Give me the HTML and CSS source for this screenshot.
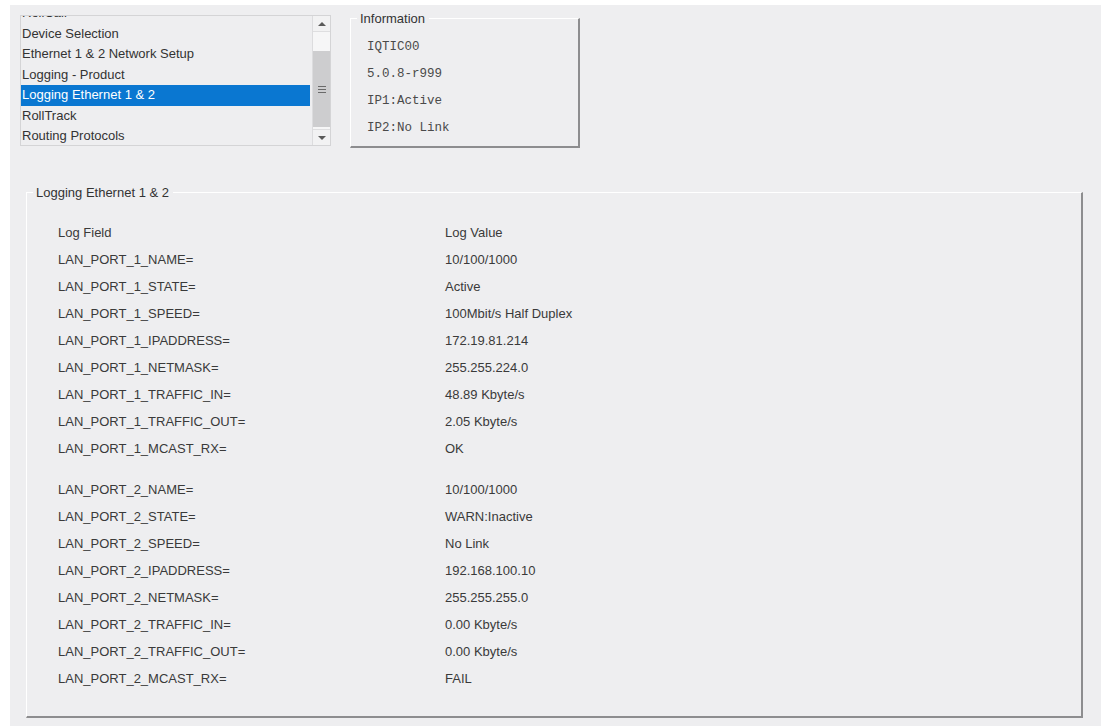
FILE: index.html
```html
<!DOCTYPE html>
<html>
<head>
<meta charset="utf-8">
<title>Logging Ethernet 1 &amp; 2</title>
<link rel="stylesheet" href="styles.css">
</head>
<body>
<div class="window">
  <div class="top">
    <div class="listbox">
      <div class="list-view">
        <ul class="items">
          <li>RollCall</li>
          <li>Device Selection</li>
          <li>Ethernet 1 &amp; 2 Network Setup</li>
          <li>Logging - Product</li>
          <li class="selected">Logging Ethernet 1 &amp; 2</li>
          <li>RollTrack</li>
          <li>Routing Protocols</li>
        </ul>
      </div>
      <div class="scrollbar">
        <div class="sb-btn"><span class="arrow-up"></span></div>
        <div class="sb-track sb-track-top"></div>
        <div class="sb-thumb"><span class="grip"></span></div>
        <div class="sb-track sb-track-bottom"></div>
        <div class="sb-btn"><span class="arrow-down"></span></div>
      </div>
    </div>

    <fieldset class="group info">
      <legend>Information</legend>
      <div class="info-lines">
        <div>IQTIC00</div>
        <div>5.0.8-r999</div>
        <div>IP1:Active</div>
        <div>IP2:No Link</div>
      </div>
    </fieldset>
  </div>

  <fieldset class="group log">
    <legend>Logging Ethernet 1 &amp; 2</legend>
    <div class="log-grid">
      <div>Log Field</div><div>Log Value</div>
      <div>LAN_PORT_1_NAME=</div><div>10/100/1000</div>
      <div>LAN_PORT_1_STATE=</div><div>Active</div>
      <div>LAN_PORT_1_SPEED=</div><div>100Mbit/s Half Duplex</div>
      <div>LAN_PORT_1_IPADDRESS=</div><div>172.19.81.214</div>
      <div>LAN_PORT_1_NETMASK=</div><div>255.255.224.0</div>
      <div>LAN_PORT_1_TRAFFIC_IN=</div><div>48.89 Kbyte/s</div>
      <div>LAN_PORT_1_TRAFFIC_OUT=</div><div>2.05 Kbyte/s</div>
      <div>LAN_PORT_1_MCAST_RX=</div><div>OK</div>
      <div class="spacer"></div><div class="spacer"></div>
      <div>LAN_PORT_2_NAME=</div><div>10/100/1000</div>
      <div>LAN_PORT_2_STATE=</div><div>WARN:Inactive</div>
      <div>LAN_PORT_2_SPEED=</div><div>No Link</div>
      <div>LAN_PORT_2_IPADDRESS=</div><div>192.168.100.10</div>
      <div>LAN_PORT_2_NETMASK=</div><div>255.255.255.0</div>
      <div>LAN_PORT_2_TRAFFIC_IN=</div><div>0.00 Kbyte/s</div>
      <div>LAN_PORT_2_TRAFFIC_OUT=</div><div>0.00 Kbyte/s</div>
      <div>LAN_PORT_2_MCAST_RX=</div><div>FAIL</div>
    </div>
  </fieldset>
</div>
</body>
</html>
```

FILE: styles.css
```css
html, body {
  margin: 0;
  padding: 0;
  background: #ffffff;
}

body {
  font-family: "Liberation Sans", Arial, sans-serif;
  font-size: 13px;
  color: #333333;
}

.window {
  margin: 5px 0 0 10px;
  min-height: calc(100vh - 5px);
  background: #eeeef0;
  padding: 0 18px 0 10px;
  box-sizing: border-box;
}

/* ---- top row: navigation list + info box ---- */
.top {
  display: flex;
  align-items: flex-start;
  gap: 19px;
  padding-top: 10px;
}

.listbox {
  display: flex;
  width: 311px;
  height: 131px;
  border: 1px solid #d4d4d6;
  box-sizing: border-box;
  background: #eeeef0;
}

.list-view {
  flex: 1;
  overflow: hidden;
}

/* list is scrolled down by a partial row */
.items {
  list-style: none;
  margin: -12.75px 0 0 0;
  padding: 0;
}

.items li {
  height: 20.5px;
  line-height: 20.5px;
  padding-left: 1px;
  margin-right: 1px;
  white-space: nowrap;
  color: #333333;
}

.items li.selected {
  background: #0a77d1;
  color: #ffffff;
}

/* scrollbar */
.scrollbar {
  width: 18px;
  margin-left: 1px;
  display: flex;
  flex-direction: column;
  border-left: 1px solid #dcdcde;
  box-sizing: border-box;
  background: #f4f4f5;
}

.sb-btn {
  height: 15px;
  display: flex;
  align-items: center;
  justify-content: center;
  background: #f2f2f3;
  border-bottom: 1px solid #dedee0;
}

.sb-btn:last-child {
  border-bottom: none;
  border-top: 1px solid #dedee0;
}

.arrow-up,
.arrow-down {
  width: 0;
  height: 0;
  border-left: 4px solid transparent;
  border-right: 4px solid transparent;
}

.arrow-up {
  border-bottom: 4px solid #5a5a5a;
}

.arrow-down {
  border-top: 4px solid #5a5a5a;
}

.sb-track-top {
  height: 19px;
  background: #f6f6f7;
}

.sb-track-bottom {
  height: 2px;
  background: #f6f6f7;
}

.sb-thumb {
  flex: 1;
  background: #cdcdcf;
  display: flex;
  align-items: center;
  justify-content: center;
}

.grip {
  width: 8px;
  height: 7px;
  background: repeating-linear-gradient(to bottom, #6a6a6a 0 1px, transparent 1px 3px);
}

/* ---- titled group boxes ---- */
.group {
  margin: 0;
  padding: 0;
  border-style: solid;
  border-color: #ffffff #8d8d8f #8d8d8f #ffffff;
  border-width: 1px 2px 2px 1px;
  min-width: 0;
}

.group legend {
  font-size: 13px;
  line-height: 15px;
  padding: 0 4px 0 3px;
  margin-left: 6px;
  color: #333333;
}

.info {
  width: 230px;
  height: 137px;
  box-sizing: border-box;
  margin-top: -4px;
}

.info-lines {
  font-family: "Liberation Mono", "Courier New", monospace;
  font-size: 12.5px;
  color: #4a4a4a;
  padding: 8px 0 0 16px;
}

.info-lines div {
  height: 27px;
  line-height: 27px;
}

.log {
  margin: 37px 0 0 6px;
  padding: 19px 0 24px 0;
}

.log-grid {
  display: grid;
  grid-template-columns: 387px 1fr;
  padding-left: 31px;
  color: #3a3a3a;
}

.log-grid > div {
  height: 27px;
  line-height: 27px;
  white-space: nowrap;
}

.log-grid > .spacer {
  height: 14px;
}
```
